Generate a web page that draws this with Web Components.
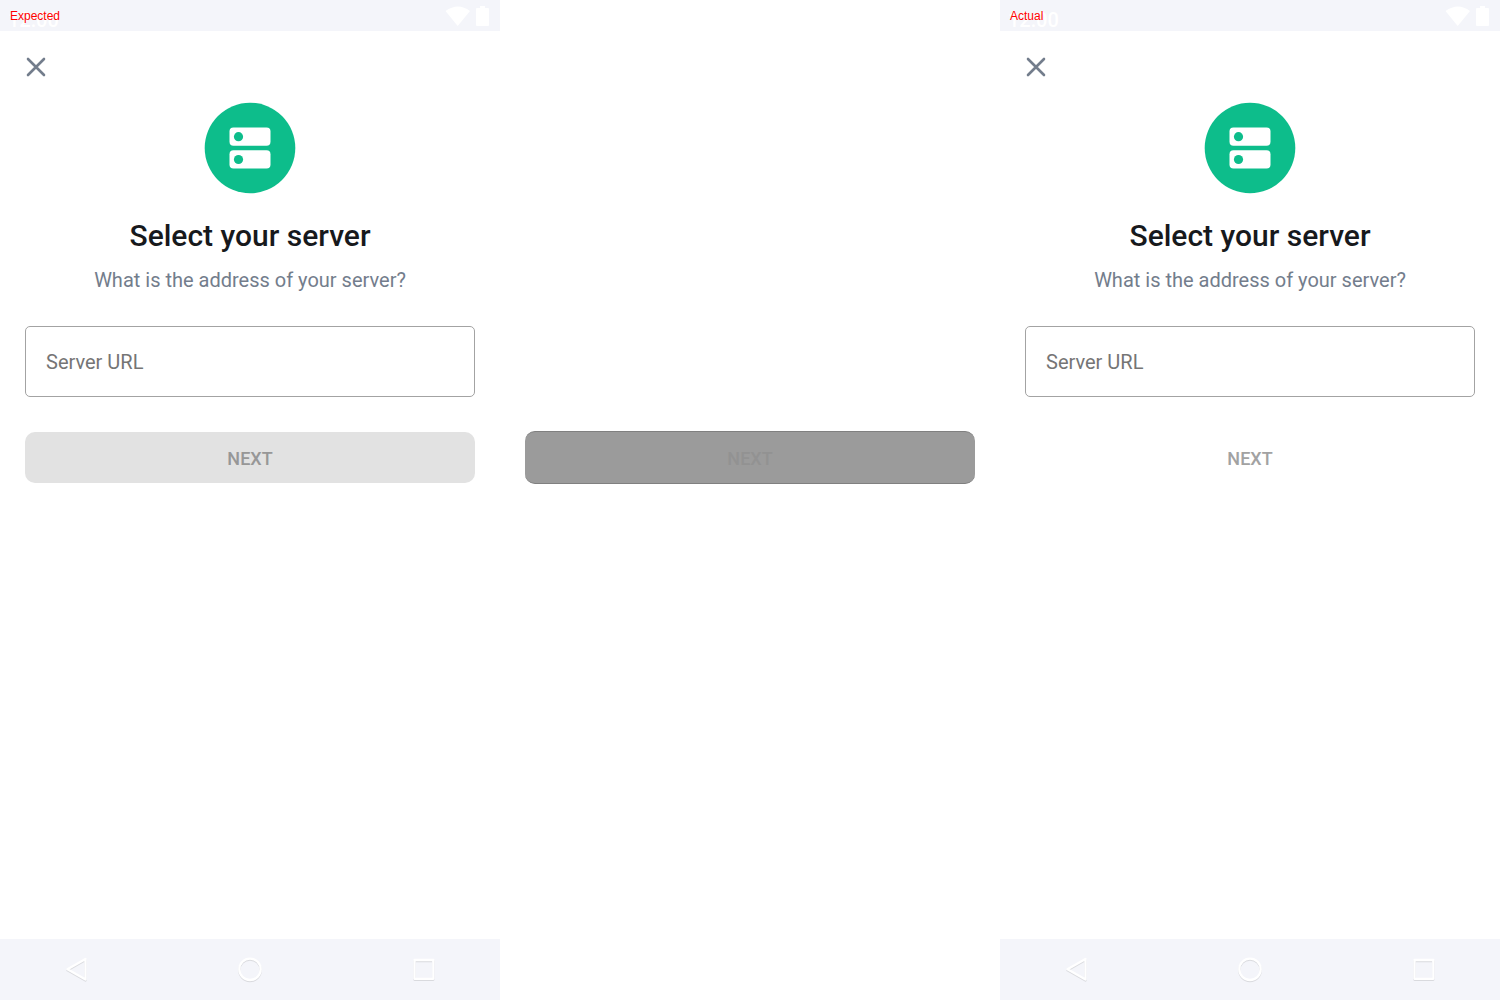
<!DOCTYPE html>
<html lang="en">
<head>
<meta charset="utf-8">
<title>Select your server</title>
<style>
  html, body { margin: 0; background: #fff; }
  body { font-family: Roboto, "Liberation Sans", sans-serif; }
</style>
</head>
<body>
<snapshot-compare>
  <phone-screen caption="Expected"><next-button slot="action" kind="filled">NEXT</next-button></phone-screen>
  <diff-panel><next-button kind="diff">NEXT</next-button></diff-panel>
  <phone-screen caption="Actual"><next-button slot="action" kind="plain">NEXT</next-button></phone-screen>
</snapshot-compare>
<script>
class BaseElement extends HTMLElement {
  constructor() {
    super();
    this.attachShadow({ mode: 'open' });
  }
  connectedCallback() {
    this.shadowRoot.innerHTML = '<style>*{box-sizing:border-box}:host{box-sizing:border-box}</style>' + this.render();
  }
}

customElements.define('snapshot-compare', class extends BaseElement {
  render() {
    return `<style>
      :host { display: grid; grid-template-columns: repeat(3, 1fr); min-height: 100vh; }
    </style><slot></slot>`;
  }
});

customElements.define('status-bar', class extends BaseElement {
  render() {
    return `<style>
      :host { display: flex; align-items: center; height: 31px; padding: 0 8px; background: #f4f5fa;
              position: relative; color: #fff; }
      time { flex: 1; font: 500 20px/24px Roboto, sans-serif; padding-top: 8px; }
      .caption { position: absolute; left: 10px; top: 8px; color: #f00; font: 12px/16px "Liberation Sans", sans-serif; }
      svg { display: block; }
    </style>
    <time>12:00</time>
    <span class="caption">${this.getAttribute('caption')}</span>
    <svg width="26" height="20" viewBox="0 0 26 20" fill="#fff"><path d="M0.500 5Q13-4 25 5L12.700 20Z"/></svg>
    <svg width="21" height="22" viewBox="0 0 21 22" fill="#fff"><path d="M9 1h5v2h3q1 0 1 1v16q0 1-1 1H6q-1 0-1-1V4q0-1 1-1h3z"/></svg>`;
  }
});

customElements.define('nav-bar', class extends BaseElement {
  render() {
    return `<style>
      :host { display: flex; justify-content: space-between; align-items: center; height: 61px; padding: 0 62px;
              background: #f4f5fa; }
      button { border: 0; padding: 0; background: none; }
      svg { display: block; fill: none; stroke: #fff; stroke-width: 2.300; stroke-linejoin: round;
            filter: drop-shadow(0 1px 0 #d9dade); }
    </style>
    <button aria-label="Back"><svg width="28" height="28" viewBox="0 0 28 28"><path d="M23.500 3v20.500L5.500 13.300z"/></svg></button>
    <button aria-label="Home"><svg width="28" height="28" viewBox="0 0 28 28"><circle cx="14" cy="13.300" r="10.700"/></svg></button>
    <button aria-label="Overview"><svg width="28" height="28" viewBox="0 0 28 28"><path d="M4.500 4h18.800v18.800h-18.800z"/></svg></button>`;
  }
});

customElements.define('close-button', class extends BaseElement {
  render() {
    return `<style>
      :host { display: flex; height: 72px; align-items: center; }
      button { border: 0; padding: 0; background: none; }
      svg { display: block; }
    </style>
    <button aria-label="Close"><svg width="22" height="22" viewBox="0 0 22 22" fill="none" stroke="#737d8c" stroke-width="2.600" stroke-linecap="round"><path d="M3 3l16 16M19 3L3 19"/></svg></button>`;
  }
});

customElements.define('server-logo', class extends BaseElement {
  render() {
    return `<style>:host, svg { display: block; }</style>
    <svg width="92" height="92" viewBox="0 0 92 92" aria-hidden="true">
      <circle cx="46" cy="46" r="45.300" fill="#0dbd8b"/>
      <g fill="#fff"><rect x="25.500" y="25.500" width="41" height="18.300" rx="4"/><rect x="25.500" y="48.300" width="41" height="18.300" rx="4"/></g>
      <g fill="#0dbd8b"><circle cx="34.500" cy="34.700" r="4.600"/><circle cx="34.500" cy="57.500" r="4.600"/></g>
    </svg>`;
  }
});

customElements.define('server-field', class extends BaseElement {
  render() {
    return `<style>
      :host { display: block; }
      input { display: block; width: 100%; height: 71px; margin: 0; padding: 0 20px; border: 1px solid #a3a3a3;
              border-radius: 5px; background: #fff; font: 400 20px/24px Roboto, sans-serif; color: #17191c; outline: 0; }
      input::placeholder { color: #757575; opacity: 1; }
    </style>
    <input type="url" aria-label="Server URL" placeholder="Server URL">`;
  }
});

customElements.define('next-button', class extends BaseElement {
  render() {
    return `<style>
      :host { display: block; }
      button { display: block; width: 100%; height: 51px; border: 0; padding: 2px 0 0; border-radius: 10px;
               background: none; color: #a2a2a2; font: 500 18px/24px Roboto, sans-serif; }
      :host([kind="filled"]) button { background: #e2e2e2; color: #979797; }
      :host([kind="diff"]) button { height: 53px; background: #9b9b9b; color: #929292;
               border: solid #808080; border-width: 1px 0; }
    </style>
    <button disabled><slot></slot></button>`;
  }
});

customElements.define('diff-panel', class extends BaseElement {
  render() {
    return `<style>
      :host { display: block; padding: 431px 25px 0; background: #fff; }
    </style><slot></slot>`;
  }
});

customElements.define('phone-screen', class extends BaseElement {
  render() {
    return `<style>
      :host { display: flex; flex-direction: column; background: #fff; }
      main { flex: 1; display: flex; flex-direction: column; padding: 0 25px; }
      server-logo { align-self: center; margin-top: -1px; }
      h1 { margin: 22px 0 0; text-align: center; font: 500 30px/40px Roboto, sans-serif; color: #17191c; }
      p { margin: 12px 0 34px; text-align: center; font: 400 20px/24px Roboto, sans-serif; color: #737d8c; }
      ::slotted(*) { margin-top: 35px; }
    </style>
    <status-bar caption="${this.getAttribute('caption')}"></status-bar>
    <main>
      <close-button></close-button>
      <server-logo></server-logo>
      <h1>Select your server</h1>
      <p>What is the address of your server?</p>
      <server-field></server-field>
      <slot name="action"></slot>
    </main>
    <nav-bar></nav-bar>`;
  }
});
</script>
</body>
</html>
